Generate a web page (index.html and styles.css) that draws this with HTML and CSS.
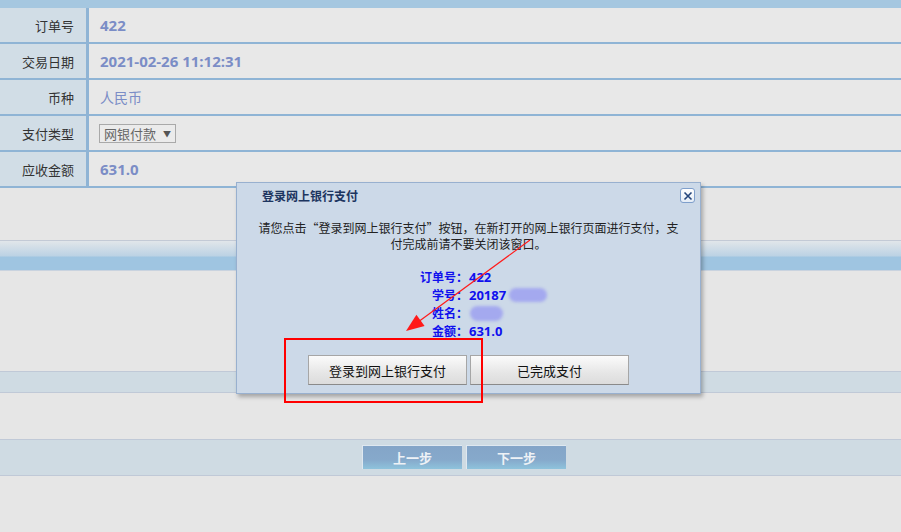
FILE: index.html
```html
<!DOCTYPE html>
<html lang="zh-CN">
<head>
<meta charset="utf-8">
<title>登录网上银行支付</title>
<link rel="stylesheet" href="styles.css">
</head>
<body>
<div class="page">
  <div class="topbar"></div>
  <div class="info-table">
    <div class="row"><div class="label">订单号</div><div class="value num">422</div></div>
    <div class="row"><div class="label">交易日期</div><div class="value num">2021-02-26 11:12:31</div></div>
    <div class="row"><div class="label">币种</div><div class="value">人民币</div></div>
    <div class="row"><div class="label">支付类型</div><div class="value"><span class="select">网银付款<span class="caret">▼</span></span></div></div>
    <div class="row"><div class="label">应收金额</div><div class="value num">631.0</div></div>
  </div>
  <div class="gap-a"></div>
  <div class="section-head"></div>
  <div class="gap-b"></div>
  <div class="band band-thin"></div>
  <div class="gap-c"></div>
  <div class="band band-nav">
    <button class="nav-btn">上一步</button>
    <button class="nav-btn">下一步</button>
  </div>
</div>

<div class="dialog">
  <div class="dialog-title">登录网上银行支付</div>
  <span class="dialog-close"><svg width="10" height="10" viewBox="0 0 10 10"><path d="M1.5 1.5 L8.5 8.5 M8.5 1.5 L1.5 8.5" stroke="#25457a" stroke-width="1.6" fill="none"/></svg></span>
  <p class="dialog-msg">请您点击“登录到网上银行支付”按钮，在新打开的网上银行页面进行支付，支<br>付完成前请不要关闭该窗口。</p>
  <div class="pay-info">
    <span class="k">订单号：</span><span class="v">422</span>
    <span class="k">学号：</span><span class="v">20187<span class="blur blur-id"></span></span>
    <span class="k">姓名：</span><span class="v"><span class="blur blur-name"></span></span>
    <span class="k">金额：</span><span class="v">631.0</span>
  </div>
  <div class="dialog-actions">
    <button class="dlg-btn">登录到网上银行支付</button>
    <button class="dlg-btn">已完成支付</button>
  </div>
</div>

<div class="mark-box"></div>
<svg class="annot" width="901" height="532" viewBox="0 0 901 532">
  <line x1="530" y1="240" x2="414" y2="325" stroke="#ff1a1a" stroke-width="1.2"/>
  <polygon points="406,331 416.4,314.7 424.6,325.9" fill="#ff1a1a"/>
</svg>
</body>
</html>
```
FILE: styles.css
```css
html, body {
  margin: 0;
  padding: 0;
}
body {
  background: #e6e6e6;
  width: 901px;
  height: 532px;
  overflow: hidden;
  position: relative;
  font-family: "Noto Sans CJK SC", "Noto Sans", sans-serif;
}
.page {
  display: flex;
  flex-direction: column;
}
.topbar {
  height: 8px;
  background: #a5c7e0;
}
.info-table {
  display: flex;
  flex-direction: column;
}
.row {
  display: flex;
  height: 34px;
  border-bottom: 2px solid #8fb4d5;
}
.label {
  width: 74px;
  padding-right: 12px;
  border-right: 3px solid #8fb4d5;
  background: #d1dde6;
  color: #333;
  font-size: 13px;
  display: flex;
  align-items: center;
  justify-content: flex-end;
}
.value {
  flex: 1;
  background: #e8e8e8;
  padding-left: 11px;
  display: flex;
  align-items: center;
  color: #7b8dc6;
  font-size: 14px;
}
.value.num {
  font-family: "Open Sans", "Noto Sans CJK SC", sans-serif;
  font-weight: 700;
  font-size: 15px;
}
.select {
  display: inline-flex;
  align-items: center;
  height: 17px;
  width: 71px;
  padding-left: 4px;
  border: 1px solid #a9a9a9;
  background: #ebebeb;
  color: #666;
  font-size: 13px;
  margin-left: -1px;
}
.caret {
  font-size: 8px;
  margin-left: 7px;
  color: #555;
}
.gap-a { height: 52px; }
.section-head {
  height: 29px;
  border-top: 1px solid #c3cad6;
  border-bottom: 1px solid #c9d3df;
  background: linear-gradient(#e1e6ea 0, #bcd2e4 15px, #9fc5e1 16px, #9fc5e1 100%);
}
.gap-b { height: 100px; }
.band {
  background: #cfdbe3;
  border-top: 1px solid #c0c9d7;
  border-bottom: 1px solid #c0c9d7;
}
.band-thin { height: 20px; }
.gap-c { height: 46px; }
.band-nav {
  height: 35px;
  display: flex;
  justify-content: center;
  align-items: flex-start;
  gap: 4px;
  padding-left: 27px;
  box-sizing: content-box;
}
.nav-btn {
  margin-top: 5px;
  width: 100px;
  height: 24px;
  border: none;
  border-top: 1px solid #dfe8f0;
  border-left: 1px solid #dfe8f0;
  background: linear-gradient(#84a5c8 0, #86a9cb 60%, #8ec3dc 100%);
  color: #eef2f6;
  font-family: "Noto Sans CJK SC", sans-serif;
  font-weight: 700;
  font-size: 13px;
  padding: 0;
}

/* dialog */
.dialog {
  position: absolute;
  left: 236px;
  top: 182px;
  width: 463px;
  height: 210px;
  background: #ccd9e8;
  border: 1px solid #98b0cf;
  box-shadow: 2px 3px 4px rgba(0, 0, 0, 0.28);
  display: flex;
  flex-direction: column;
}
.dialog-title {
  padding: 4px 0 0 25px;
  line-height: 18px;
  font-size: 12px;
  font-weight: 700;
  color: #1c3560;
}
.dialog-close {
  position: absolute;
  top: 5px;
  right: 5px;
  width: 13px;
  height: 13px;
  border: 1px solid #7f9fcb;
  border-radius: 3px;
  background: linear-gradient(#ffffff, #e4ecf6);
  display: flex;
  align-items: center;
  justify-content: center;
}
.dialog-msg {
  margin: 15px 0 0;
  padding: 0 18px;
  text-align: center;
  font-size: 12px;
  line-height: 16px;
  color: #222;
}
.pay-info {
  margin-top: 16px;
  display: grid;
  grid-template-columns: 231px auto;
  column-gap: 1px;
  font-size: 12px;
  line-height: 18px;
  font-weight: 700;
  color: #1010ee;
  font-family: "Open Sans", "Noto Sans CJK SC", sans-serif;
}
.pay-info .k {
  text-align: right;
  font-family: "Noto Sans CJK SC", sans-serif;
}
.pay-info .v {
  position: relative;
  font-size: 13px;
}
.blur {
  position: absolute;
  background: #a4a9ef;
  filter: blur(1.5px);
  border-radius: 8px;
}
.blur-id {
  left: 40px;
  top: 2px;
  width: 38px;
  height: 14px;
}
.blur-name {
  left: 1px;
  top: 2px;
  width: 33px;
  height: 15px;
}
.dialog-actions {
  margin-top: 15px;
  display: flex;
  justify-content: center;
  gap: 3px;
}
.dlg-btn {
  width: 159px;
  height: 30px;
  border: 1px solid #a6a6a6;
  border-bottom-color: #8a8a8a;
  background: linear-gradient(#fbfbfb, #e6e6e6 60%, #dcdcdc);
  color: #111;
  font-family: "Noto Sans CJK SC", sans-serif;
  font-size: 13px;
  padding: 0;
}

/* annotations */
.mark-box {
  position: absolute;
  left: 284px;
  top: 338px;
  width: 195px;
  height: 61px;
  border: 2px solid #ff0000;
}
.annot {
  position: absolute;
  left: 0;
  top: 0;
  pointer-events: none;
}
```
